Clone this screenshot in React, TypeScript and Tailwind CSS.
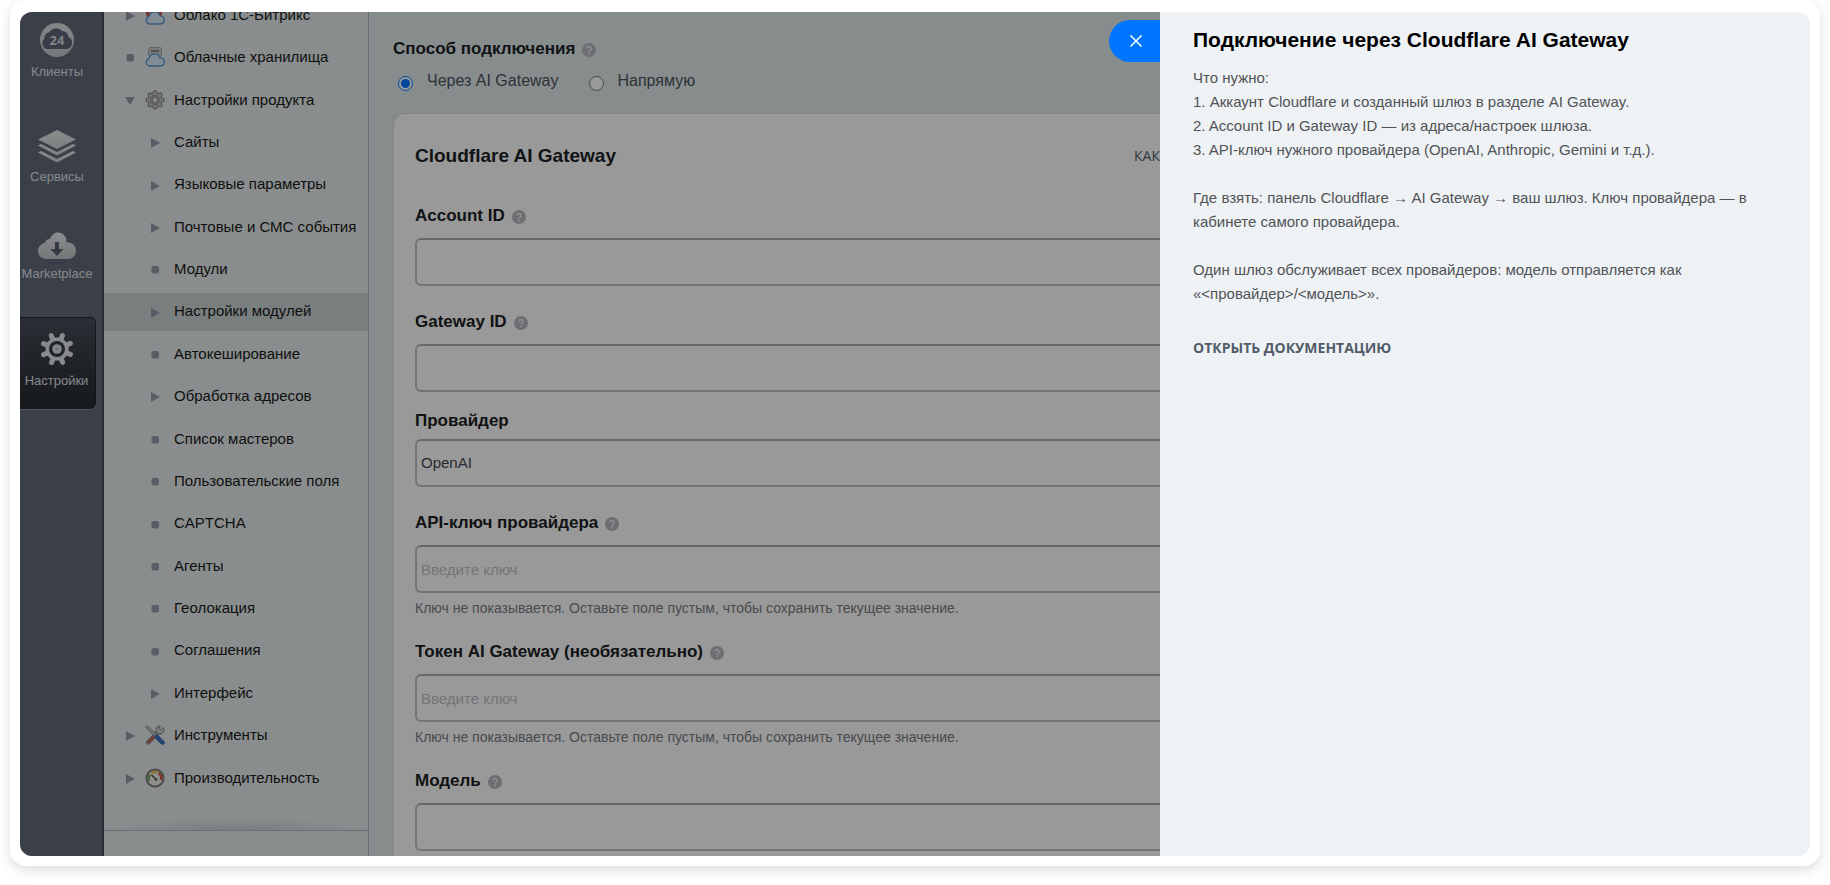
import type { ReactNode } from 'react';
import clsx from 'clsx';

type Marker = 'closed' | 'open' | 'dot';

type MenuItem = {
  title: string;
  marker: Marker;
  icon?: ReactNode;
  active?: boolean;
};

function ClientsIcon() {
  return (
    <svg width="36" height="34" viewBox="0 0 36 34" className="block">
      <defs>
        <linearGradient id="clients" x1="0" y1="0" x2="0" y2="1">
          <stop offset="0" stopColor="#dde1e2" />
          <stop offset="1" stopColor="#c3c8cb" />
        </linearGradient>
      </defs>
      <circle cx="18" cy="17" r="17" fill="url(#clients)" />
      <path
        d="M9.500 26a6 6 0 0 1-4-10.500 5 5 0 0 1 4.500-6 8 8 0 0 1 13-1.500 6.500 6.500 0 0 1 6.500 6A6.300 6.300 0 0 1 27 26Z"
        fill="#5d6577"
      />
      <text x="18" y="22" textAnchor="middle" fontSize="13" fontWeight="700" fill="#d5dadd" fontFamily="Open Sans, sans-serif">
        24
      </text>
    </svg>
  );
}

function ServicesIcon() {
  return (
    <svg width="38" height="34" viewBox="0 0 38 34" className="block">
      <defs>
        <linearGradient id="services" x1="0" y1="0" x2="0" y2="1">
          <stop offset="0" stopColor="#e6e9ea" />
          <stop offset="1" stopColor="#d0d4d7" />
        </linearGradient>
      </defs>
      <g fill="url(#services)">
        <path d="M19 2 38 11.500 19 21 0 11.500Z" />
        <path d="M0 17.500l3-1.500 16 8 16-8 3 1.500-19 10Z" />
        <path d="M0 24.500l3-1.500 16 8 16-8 3 1.500-19 10Z" />
      </g>
    </svg>
  );
}

function MarketIcon() {
  return (
    <svg width="38" height="34" viewBox="0 0 38 34" className="block">
      <defs>
        <linearGradient id="market" x1="0" y1="0" x2="0" y2="1">
          <stop offset="0" stopColor="#e9ebec" />
          <stop offset="1" stopColor="#c2c6ca" />
        </linearGradient>
      </defs>
      <path
        d="M8 34a8 8 0 0 1-8-8c0-4 3-7.500 7-8 .3-2 2-4 5-4C13.500 10 16.500 7.500 20 7.500c5 0 8.500 4 8.500 8.700 0 .4 0 .8-.1 1.200C33 17 38 20.500 38 26a8 8 0 0 1-8 8Z"
        fill="url(#market)"
      />
      <path d="M17 17h4v7h4.500L19 31l-6.500-7H17Z" fill="#5a6070" />
    </svg>
  );
}

function SettingsIcon() {
  return (
    <svg width="34" height="34" viewBox="0 0 34 34" className="block">
      <g stroke="#e4e6e8" strokeWidth="5" strokeLinecap="round">
        {[22, 67, 112, 157].map((angle) => (
          <path key={angle} d="M17 2.500v29" transform={`rotate(${angle} 17 17)`} />
        ))}
      </g>
      <circle cx="17" cy="17" r="11.500" fill="#e4e6e8" />
      <circle cx="17" cy="17" r="8" fill="#363b45" />
      <circle cx="17" cy="17" r="4.800" fill="#dcdfe2" />
      <circle cx="17" cy="17" r="1.500" fill="#b9bdc3" />
    </svg>
  );
}

function CloudIcon({ back }: { back: 'globe' | 'disk' }) {
  return (
    <svg width="20" height="20" viewBox="0 0 20 20" className="block">
      {back === 'globe' ? (
        <g>
          <circle cx="9" cy="8" r="8" fill="#d5503f" />
          <path d="M5 2v8M9 1v9M13 2v8" stroke="#f0d5d0" strokeWidth="1" />
        </g>
      ) : (
        <g>
          <rect x="3.500" y="0.500" width="13" height="9" rx="2" fill="#cfcfcf" stroke="#a2a2a2" />
          <path d="M6 4h8" stroke="#8a8a8a" strokeWidth="2" />
        </g>
      )}
      <path
        d="M4.500 19a3.800 3.800 0 0 1-.6-7.400C4.500 8.500 7 6.800 9.800 6.800c2.600 0 4.400 1.500 5 3.800 2.600.2 4.500 1.900 4.500 4.200 0 2.600-1.800 4.200-4.300 4.200Z"
        fill="#d6e9f7"
        stroke="#5b93cf"
        strokeWidth="1.300"
      />
    </svg>
  );
}

function ProductIcon() {
  return (
    <svg width="20" height="20" viewBox="0 0 34 34" className="block">
      <g stroke="#7a7a7a" strokeWidth="8" strokeLinecap="round">
        {[0, 45, 90, 135].map((angle) => (
          <path key={angle} d="M17 4.500v25" transform={`rotate(${angle} 17 17)`} />
        ))}
      </g>
      <circle cx="17" cy="17" r="13" fill="#7a7a7a" />
      <g stroke="#c4c4c4" strokeWidth="5" strokeLinecap="round">
        {[0, 45, 90, 135].map((angle) => (
          <path key={angle} d="M17 4.500v25" transform={`rotate(${angle} 17 17)`} />
        ))}
      </g>
      <circle cx="17" cy="17" r="11.500" fill="#c4c4c4" />
      <circle cx="17" cy="17" r="8" fill="#b0b0b0" stroke="#8f8f8f" strokeWidth="1.500" />
      <circle cx="17" cy="17" r="4.500" fill="#e3ecec" stroke="#808080" strokeWidth="1.500" />
    </svg>
  );
}

function ToolsIcon() {
  return (
    <svg width="20" height="20" viewBox="0 0 20 20" fill="none" strokeLinecap="round" className="block">
      <path d="M13.500 7 3 17.500" stroke="#777" strokeWidth="4" />
      <path d="M13.500 7 3 17.500" stroke="#dcdcdc" strokeWidth="2.200" />
      <path d="M8.500 12 3.500 17" stroke="#cf5a43" strokeWidth="2.200" />
      <path d="M17.800 2.800 15.500 5l-1.800-1.800 1.800-2.200a4 4 0 1 0 3.400 4Z" fill="#d8d8d8" stroke="#777" />
      <path d="M2 2l8 8" stroke="#777" strokeWidth="3" />
      <path d="M2 2l8 8" stroke="#e0e0e0" strokeWidth="1.400" />
      <path d="M12 12l5.500 5.500" stroke="#2f69bd" strokeWidth="4.500" />
      <path d="M12 11.500l5 5" stroke="#5f95dd" strokeWidth="1" />
    </svg>
  );
}

function GaugeIcon() {
  return (
    <svg width="20" height="20" viewBox="0 0 20 20" fill="none" className="block">
      <circle cx="10" cy="10" r="8.600" fill="#eeeee8" stroke="#7c7c7c" strokeWidth="2" />
      <path d="M4.500 13A6.200 6.200 0 0 1 5 6.500" stroke="#6fa85c" strokeWidth="2.200" />
      <path d="M6 5.500a6.200 6.200 0 0 1 6.500-1.200" stroke="#e8c13c" strokeWidth="2.200" />
      <path d="M13.500 5a6.200 6.200 0 0 1 2.300 7" stroke="#d65441" strokeWidth="2.200" />
      <path d="M6.500 7l4 4" stroke="#555" strokeWidth="1.600" />
      <circle cx="11" cy="11.500" r="1.400" fill="#666" />
    </svg>
  );
}

const railItems = [
  { title: 'Клиенты', icon: <ClientsIcon />, className: 'mt-[11px]' },
  { title: 'Сервисы', icon: <ServicesIcon />, className: 'mt-12' },
  { title: 'Marketplace', icon: <MarketIcon />, className: 'mt-10' },
  {
    title: 'Настройки',
    icon: <SettingsIcon />,
    className:
      'mt-[35px] h-[92px] rounded-r-md border border-l-0 border-[#20242b] bg-linear-to-b from-[#484d59] to-[#262a2e] pt-3.5 shadow-[0_1px_0_#8a90a0]',
  },
];

const menuItems: MenuItem[] = [
  { title: 'Облако 1С-Битрикс', marker: 'closed', icon: <CloudIcon back="globe" /> },
  { title: 'Облачные хранилища', marker: 'dot', icon: <CloudIcon back="disk" /> },
  { title: 'Настройки продукта', marker: 'open', icon: <ProductIcon /> },
  { title: 'Сайты', marker: 'closed' },
  { title: 'Языковые параметры', marker: 'closed' },
  { title: 'Почтовые и СМС события', marker: 'closed' },
  { title: 'Модули', marker: 'dot' },
  { title: 'Настройки модулей', marker: 'closed', active: true },
  { title: 'Автокеширование', marker: 'dot' },
  { title: 'Обработка адресов', marker: 'closed' },
  { title: 'Список мастеров', marker: 'dot' },
  { title: 'Пользовательские поля', marker: 'dot' },
  { title: 'CAPTCHA', marker: 'dot' },
  { title: 'Агенты', marker: 'dot' },
  { title: 'Геолокация', marker: 'dot' },
  { title: 'Соглашения', marker: 'dot' },
  { title: 'Интерфейс', marker: 'closed' },
  { title: 'Инструменты', marker: 'closed', icon: <ToolsIcon /> },
  { title: 'Производительность', marker: 'closed', icon: <GaugeIcon /> },
];

function MenuMarker({ type }: { type: Marker }) {
  return (
    <svg width="10" height="10" viewBox="0 0 10 10" fill="#959caa" className="mt-0.5 justify-self-center">
      {type === 'closed' && <path d="M1 0l9 5-9 5Z" />}
      {type === 'open' && <path d="M0 1h10L5 9Z" />}
      {type === 'dot' && <rect x="1.500" y="1" width="7.500" height="7.500" rx="2" />}
    </svg>
  );
}

function Help() {
  return (
    <button type="button" aria-label="Подсказка" className="mt-0.5 ml-[7px] block">
      <svg width="14" height="14" viewBox="0 0 14 14" fill="none">
        <circle cx="7" cy="7" r="7" fill="#b4b8bf" />
        <path d="M5 5.500a2 2 0 1 1 2.900 1.800c-.6.300-.9.600-.9 1.200" stroke="#eef0f1" strokeWidth="1.400" />
        <circle cx="7" cy="10.500" r="0.900" fill="#eef0f1" />
      </svg>
    </button>
  );
}

const inputStyles =
  'block h-12 w-full appearance-none rounded-l-md border-2 border-r-0 border-[#bcc2c9] border-t-[#a9b0b7] bg-white px-1 text-[15px] text-[#40464d] outline-none placeholder:text-[#bfc3c8]';

type FieldProps = {
  id: string;
  label: string;
  hint?: string;
  placeholder?: string;
};

function Field({ id, label, hint, placeholder }: FieldProps) {
  return (
    <div>
      <div className="mb-2.5 flex h-6 items-center">
        <label htmlFor={id} className="text-[17px] leading-6 font-bold text-[#1b1f24]">
          {label}
        </label>
        <Help />
      </div>
      <input id={id} type="text" placeholder={placeholder} className={inputStyles} />
      {hint && <p className="mt-[7px] text-sm leading-4 whitespace-nowrap text-[#787d85]">{hint}</p>}
    </div>
  );
}

function Rail() {
  return (
    <nav className="flex w-21 shrink-0 flex-col border-r-2 border-[#464b58] bg-[#626979] pr-1.5">
      {railItems.map((item) => (
        <a
          key={item.title}
          href="#"
          className={clsx('flex flex-col items-center pr-0.5 text-[13px] leading-4 text-[#dfe3e8]', item.className)}
        >
          {item.icon}
          <span className="mt-[7px]">{item.title}</span>
        </a>
      ))}
    </nav>
  );
}

function Menu() {
  return (
    <aside className="flex w-[265px] shrink-0 flex-col border-r border-[#a9b7c2] bg-[#e5eceb]">
      <ul className="-mt-4 flex flex-1 flex-col justify-between">
        {menuItems.map((item) => {
          const topLevel = Boolean(item.icon);
          return (
            <li key={item.title}>
              <a
                href="#"
                className={clsx(
                  'grid h-[38px] grid-cols-[12px_20px_1fr] items-center gap-x-[9px] pl-5 text-[15px] whitespace-nowrap text-[#1a1a1a]',
                  item.active && 'bg-[#cad2d4]',
                )}
              >
                {topLevel ? <MenuMarker type={item.marker} /> : <span />}
                {topLevel ? item.icon : <MenuMarker type={item.marker} />}
                <span>{item.title}</span>
              </a>
            </li>
          );
        })}
      </ul>
      <div className="h-[33px] bg-[radial-gradient(ellipse_50%_12px_at_50%_100%,#c9d0d8,transparent)]" />
      <div className="h-[26px] border-t border-[#aebac4]" />
    </aside>
  );
}

function Settings() {
  return (
    <main className="min-w-0 flex-1 overflow-hidden bg-[#e2ebec] pl-6">
      <fieldset>
        <div className="mt-[25px] flex h-6 items-center">
          <legend className="text-[17px] leading-6 font-bold text-[#1b1f24]">Способ подключения</legend>
          <Help />
        </div>
        <div className="mt-2 flex h-6 items-center pl-[5px] text-base text-[#4c535b]">
          <input id="via-gateway" name="method" type="radio" defaultChecked className="mt-1 size-[15px]" />
          <label htmlFor="via-gateway" className="mr-[30px] ml-3.5">
            Через AI Gateway
          </label>
          <input id="direct" name="method" type="radio" className="mt-1 size-[15px]" />
          <label htmlFor="direct" className="ml-3.5">
            Напрямую
          </label>
        </div>
      </fieldset>

      <section className="mt-5 h-full rounded-tl-xl border-t border-l border-[#d5dce2] bg-white pl-[21px]">
        <header className="flex items-center justify-between pt-7">
          <h2 className="text-[19px] leading-7 font-bold text-[#1b1f24]">Cloudflare AI Gateway</h2>
          <a href="#" className="font-['Open_Sans',sans-serif] text-sm text-[#525c69]">
            КАК
          </a>
        </header>
        <form className="mt-[34px] flex flex-col gap-6">
          <Field id="account" label="Account ID" />
          <Field id="gateway" label="Gateway ID" />
          <div className="-mt-[7px]">
            <label htmlFor="provider" className="mb-1.5 block text-[17px] leading-6 font-bold text-[#1b1f24]">
              Провайдер
            </label>
            <select id="provider" className={inputStyles}>
              <option>OpenAI</option>
            </select>
          </div>
          <Field
            id="api-key"
            label="API-ключ провайдера"
            placeholder="Введите ключ"
            hint="Ключ не показывается. Оставьте поле пустым, чтобы сохранить текущее значение."
          />
          <Field
            id="token"
            label="Токен AI Gateway (необязательно)"
            placeholder="Введите ключ"
            hint="Ключ не показывается. Оставьте поле пустым, чтобы сохранить текущее значение."
          />
          <Field id="model" label="Модель" />
        </form>
      </section>
    </main>
  );
}

function HelpPanel() {
  return (
    <aside className="relative w-[650px] shrink-0 bg-[#eef2f5] px-[33px] pt-3">
      <button
        type="button"
        aria-label="Закрыть"
        className="absolute top-2 -left-[51px] flex h-[42px] w-[51px] items-center justify-center rounded-l-full bg-[#0075ff] pl-0.5"
      >
        <svg width="12" height="12" viewBox="0 0 12 12" stroke="#fff" strokeWidth="1.500">
          <path d="M0.500 0.500l11 11M11.500 0.500l-11 11" />
        </svg>
      </button>
      <h1 className="text-[21px] leading-8 font-bold text-black">Подключение через Cloudflare AI Gateway</h1>
      <div className="mt-2.5 text-[15px] leading-6 text-[#525355]">
        <p>Что нужно:</p>
        <p>1. Аккаунт Cloudflare и созданный шлюз в разделе AI Gateway.</p>
        <p>2. Account ID и Gateway ID — из адреса/настроек шлюза.</p>
        <p>3. API-ключ нужного провайдера (OpenAI, Anthropic, Gemini и т.д.).</p>
        <p className="mt-6">
          Где взять: панель Cloudflare → AI Gateway → ваш шлюз. Ключ провайдера — в кабинете самого провайдера.
        </p>
        <p className="mt-6">
          Один шлюз обслуживает всех провайдеров: модель отправляется как «&lt;провайдер&gt;/&lt;модель&gt;».
        </p>
      </div>
      <a href="#" className="mt-8 inline-block font-['Open_Sans',sans-serif] text-sm leading-5 font-bold text-[#525c69]">
        ОТКРЫТЬ ДОКУМЕНТАЦИЮ
      </a>
    </aside>
  );
}

export default function App() {
  return (
    <div className="h-screen overflow-hidden bg-white px-2.5 pb-[19px] font-['Liberation_Sans',Arial,sans-serif]">
      <div className="h-full rounded-2xl bg-white px-2.5 pt-3 pb-2.5 shadow-[0_4px_12px_rgba(0,0,0,0.14)]">
        <div className="flex h-full overflow-hidden rounded-xl">
          <div className="relative flex min-w-0 flex-1 overflow-hidden">
            <Rail />
            <Menu />
            <Settings />
            <div className="absolute inset-0 bg-black/40" />
          </div>
          <HelpPanel />
        </div>
      </div>
    </div>
  );
}
